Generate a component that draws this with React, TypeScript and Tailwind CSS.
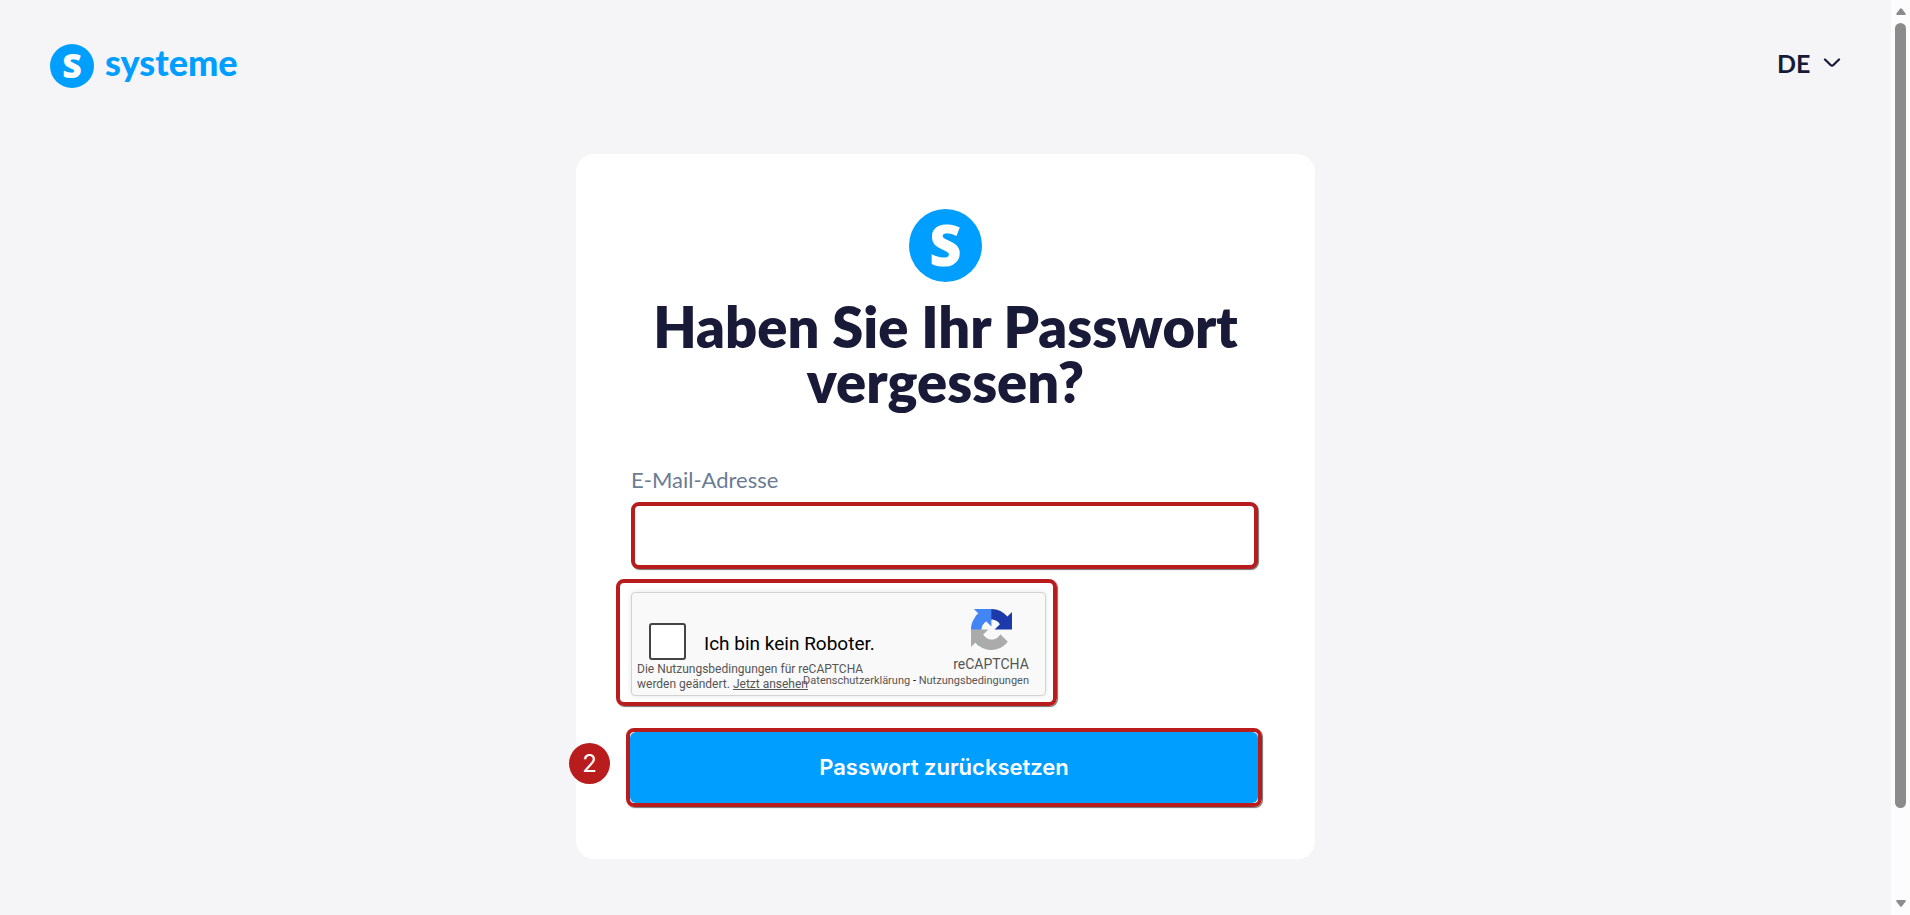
import { useState } from 'react';
import type { ReactNode } from 'react';

function LogoMark({ className }: { className: string }) {
  return (
    <svg viewBox="0 0 73 73" className={`overflow-visible ${className}`} aria-hidden="true">
      <circle cx="36.5" cy="36.5" r="36.5" fill="#009fff" />
      <text
        x="36.5"
        y="57"
        textAnchor="middle"
        fill="#fff"
        fontSize="56"
        fontWeight="800"
        fontFamily="Open Sans, sans-serif"
      >
        S
      </text>
    </svg>
  );
}

function RecaptchaLogo() {
  return (
    <svg viewBox="0 0 64 64" className="size-[41px]" aria-hidden="true">
      <path
        fill="#1c3aa9"
        d="M64 31.955l-.013-1.37V4.687l-7.16 7.16C50.967 4.674 42.033.093 32.03.093c-10.408 0-19.655 4.96-25.499 12.64l11.736 11.86a15.55 15.55 0 014.754-5.334c2.05-1.6 4.952-2.906 9.008-2.906.49 0 .868.057 1.147.165 5.025.397 9.38 3.17 11.945 7.194l-8.307 8.307c10.522-.04 22.409-.066 27.186-.065"
      />
      <path
        fill="#4285f4"
        d="M31.862.094l-1.37.013H4.594l7.16 7.16C4.58 13.126 0 22.06 0 32.063c0 10.408 4.96 19.655 12.64 25.5l11.86-11.737a15.55 15.55 0 01-5.334-4.754c-1.6-2.05-2.906-4.952-2.906-9.008 0-.49.057-.868.165-1.147.397-5.025 3.17-9.38 7.194-11.945l8.307 8.307c-.04-10.522-.066-22.409.001-27.185"
      />
      <path
        fill="#ababab"
        d="M.001 32.045l.013 1.37v25.898l7.16-7.16c5.86 7.173 14.794 11.754 24.797 11.754 10.408 0 19.655-4.96 25.499-12.64l-11.736-11.86a15.55 15.55 0 01-4.754 5.334c-2.05 1.6-4.952 2.906-9.008 2.906-.49 0-.868-.057-1.147-.165-5.025-.397-9.38-3.17-11.945-7.194l8.307-8.307c-10.522.04-22.409.066-27.186.064"
      />
    </svg>
  );
}

// Red marker frame around a step
function Highlight({ className, children }: { className: string; children: ReactNode }) {
  return (
    <div className={`rounded-lg border-4 border-[#b91c1c] shadow-[1px_1px_1px_rgba(0,0,0,0.55)] ${className}`}>
      {children}
    </div>
  );
}

function Recaptcha() {
  const [checked, setChecked] = useState(false);

  return (
    <div className="flex h-[104px] justify-between rounded border border-[#d3d3d3] bg-[#f9f9f9] pl-[5px] pr-4 font-['Roboto',sans-serif] text-[#555] shadow-[0_0_4px_1px_rgba(0,0,0,0.08)]">
      <div className="pt-[30px]">
        <label className="flex h-[37px] items-center gap-[18px] pl-3 text-[19px] text-black">
          <input
            type="checkbox"
            checked={checked}
            onChange={(e) => setChecked(e.target.checked)}
            className="size-[37px] shrink-0 appearance-none rounded-[3px] border-2 border-[#444] bg-white checked:bg-[#4285f4]"
          />
          <span className="pt-[6px] whitespace-nowrap">Ich bin kein Roboter.</span>
        </label>
        <p className="pt-[2px] text-xs leading-[15px] whitespace-nowrap">
          Die Nutzungsbedingungen für reCAPTCHA
          <br />
          werden geändert.{' '}
          <a href="#terms-update" className="underline">
            Jetzt ansehen
          </a>
        </p>
      </div>
      <div className="flex w-[76px] flex-col items-end pt-4">
        <div className="flex w-full flex-col items-center">
          <RecaptchaLogo />
          <span className="pt-[5px] text-sm leading-[18px]">reCAPTCHA</span>
        </div>
        <div className="text-[11px] leading-4 whitespace-nowrap">
          <a href="#privacy">Datenschutzerklärung</a>
          <span className="text-black"> - </span>
          <a href="#terms">Nutzungsbedingungen</a>
        </div>
      </div>
    </div>
  );
}

function Scrollbar() {
  return (
    <div className="flex w-[19px] shrink-0 flex-col items-center bg-[#fcfcfc] py-2" aria-hidden="true">
      <svg viewBox="0 0 10 7" className="h-[7px] w-[10px]" fill="#8b8b8b">
        <path d="M4 .8Q5-.4 6 .8L9.6 5.6Q10 7 8.8 7H1.2Q0 7 .4 5.6Z" />
      </svg>
      <div className="mt-2 mb-23 w-[11px] flex-1 rounded-full bg-[#8b8b8b]" />
      <svg viewBox="0 0 10 7" className="h-[7px] w-[10px] rotate-180" fill="#8b8b8b">
        <path d="M4 .8Q5-.4 6 .8L9.6 5.6Q10 7 8.8 7H1.2Q0 7 .4 5.6Z" />
      </svg>
    </div>
  );
}

export default function App() {
  const [email, setEmail] = useState('');
  const [lang, setLang] = useState('DE');

  return (
    <div className="flex min-h-screen bg-[#f5f5f8] font-['Lato',sans-serif] text-[#181a37]">
      <div className="flex-1">
        <header className="flex items-center justify-between px-[50px] pt-11">
          <a href="#home" className="flex items-center gap-[11px] text-[#009fff]">
            <LogoMark className="size-11" />
            <span className="pb-2 text-[36px] leading-9 font-black">systeme</span>
          </a>
          <div className="relative mb-[6px]">
            <select
              aria-label="Sprache"
              value={lang}
              onChange={(e) => setLang(e.target.value)}
              className="w-16 appearance-none bg-transparent text-[25px] leading-8 font-bold"
            >
              <option>DE</option>
              <option>EN</option>
            </select>
            <svg
              viewBox="0 0 18 10"
              className="pointer-events-none absolute top-[11px] right-0 h-[10px] w-[18px]"
              fill="none"
              stroke="currentColor"
              strokeWidth="2.2"
              strokeLinecap="round"
              strokeLinejoin="round"
            >
              <path d="M2 1.5L7.6 7Q9 8.4 10.4 7L16 1.5" />
            </svg>
          </div>
        </header>

        <main className="px-4 pt-[66px] pb-10">
          <div className="mx-auto max-w-[739px] rounded-[18px] bg-white px-[55px] pt-[55px] pb-[52px]">
            <LogoMark className="mx-auto size-[73px]" />
            <h1 className="mt-[17px] text-center text-[56px] leading-[55px] font-extrabold">
              Haben Sie Ihr Passwort vergessen?
            </h1>

            <form onSubmit={(e) => e.preventDefault()} className="pr-[2px]">
              <label htmlFor="email" className="mt-[57px] block text-[22px] leading-7 text-[#6b7c93]">
                E-Mail-Adresse
              </label>
              <input
                id="email"
                type="email"
                value={email}
                onChange={(e) => setEmail(e.target.value)}
                className="mt-2 block h-[67px] w-full rounded-lg border-4 border-[#b91c1c] bg-white px-4 text-xl shadow-[1px_1px_1px_rgba(0,0,0,0.55)] outline-none"
              />

              <Highlight className="mt-[10px] -ml-[15px] w-[441px] pt-[9px] pr-[7px] pb-[6px] pl-[11px]">
                <Recaptcha />
              </Highlight>

              <div className="relative mt-[22px]">
                <Highlight className="-mr-1 -ml-[5px]">
                  <button
                    type="submit"
                    className="block h-[71px] w-full rounded-md bg-[#009fff] font-['Inter',sans-serif] text-[22px] font-semibold text-white"
                  >
                    Passwort zurücksetzen
                  </button>
                </Highlight>
                <span className="absolute top-[15px] -left-[62px] flex size-[41px] items-center justify-center rounded-full bg-[#b91c1c] font-['Inter',sans-serif] text-2xl text-white">
                  2
                </span>
              </div>
            </form>
          </div>
        </main>
      </div>
      <Scrollbar />
    </div>
  );
}
